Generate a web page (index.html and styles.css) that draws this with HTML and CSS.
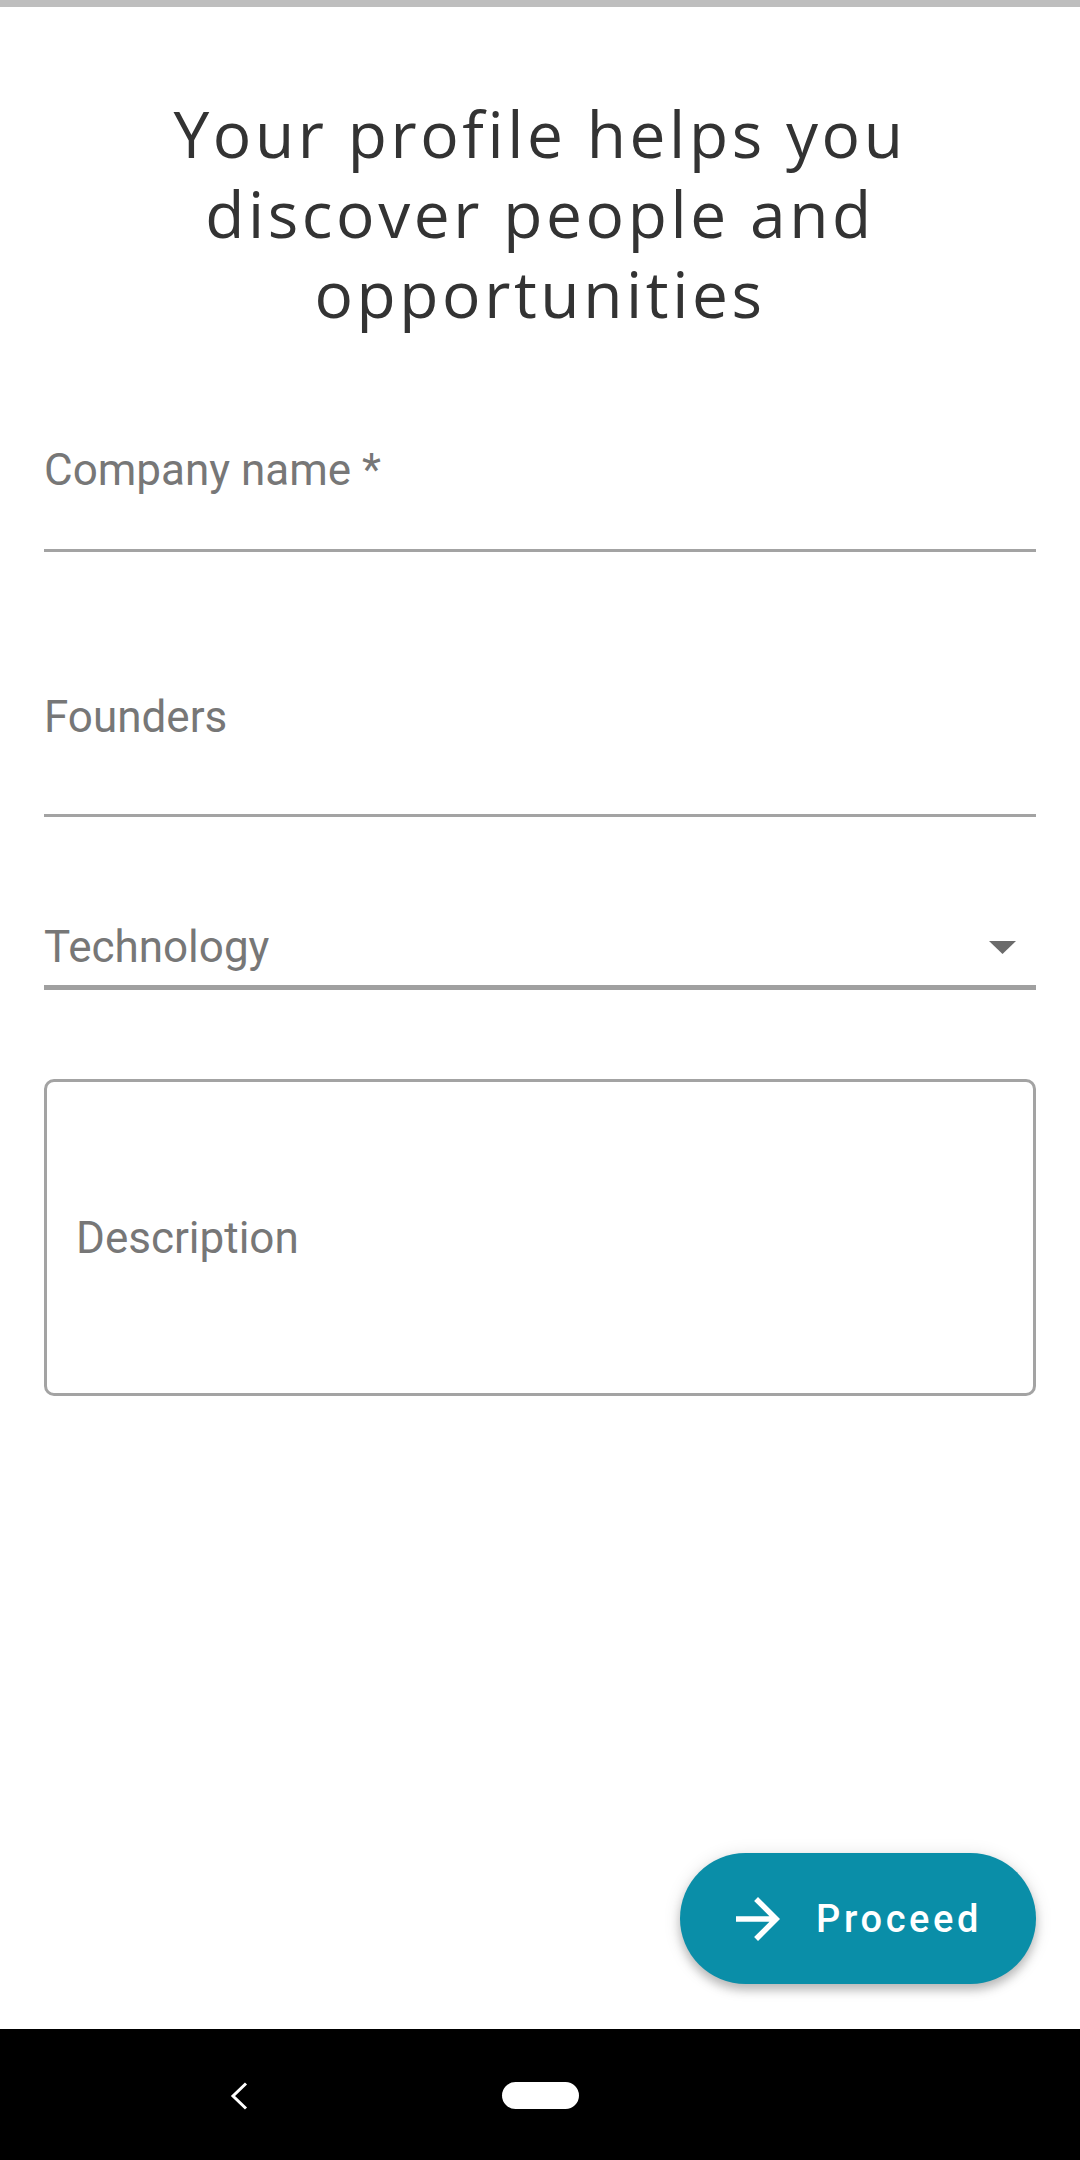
FILE: index.html
```html
<!DOCTYPE html>
<html lang="en">
<head>
<meta charset="utf-8">
<title>Profile</title>
<link rel="stylesheet" href="styles.css">
</head>
<body>
<div class="screen">
  <div class="topline"></div>
  <main class="content">
    <h1 class="title">Your profile helps you discover people and opportunities</h1>
    <div class="field field-company">
      <span class="label">Company name *</span>
    </div>
    <div class="field field-founders">
      <span class="label">Founders</span>
    </div>
    <div class="field field-select">
      <span class="label">Technology</span>
      <svg class="drop" viewBox="0 0 27 13" width="27" height="13"><path d="M0 0h27L13.5 13z" fill="#6b6b6b"/></svg>
    </div>
    <div class="textarea">
      <span class="label">Description</span>
    </div>
    <div class="spacer"></div>
    <div class="actions">
      <button class="fab">
        <svg class="fab-icon" viewBox="0 0 24 24" width="66" height="66"><path d="M12 4l-1.41 1.41L16.17 11H4v2h12.17l-5.58 5.59L12 20l8-8z" fill="#fff"/></svg>
        <span class="fab-text">Proceed</span>
      </button>
    </div>
  </main>
  <nav class="navbar">
    <svg class="back" viewBox="0 0 18 28" width="18" height="28"><path d="M16 1.5L3 14l13 12.5" fill="none" stroke="#fff" stroke-width="3"/></svg>
    <div class="home"></div>
  </nav>
</div>
</body>
</html>
```
FILE: styles.css
```css
* { box-sizing: border-box; }
html, body { margin: 0; padding: 0; background: #fff; }
.screen {
  width: 1080px;
  height: 2160px;
  display: flex;
  flex-direction: column;
  font-family: Roboto, "Liberation Sans", sans-serif;
}
.topline { height: 7px; background: #bebebe; flex: none; }
.content {
  flex: 1;
  display: flex;
  flex-direction: column;
  padding: 0 44px;
}
.title {
  margin: 87px 0 0;
  font-family: "Open Sans", "DejaVu Sans", sans-serif;
  font-weight: 400;
  font-size: 64px;
  line-height: 80px;
  color: #333333;
  text-align: center;
  padding: 0 80px;
  letter-spacing: 3.6px;
}
.label {
  display: block;
  font-size: 44px;
  line-height: 48px;
  color: #777777;
}
.field { border-bottom: 3px solid #a3a3a3; }
.field-company { margin-top: 112px; padding-bottom: 55px; }
.field-founders { margin-top: 141px; padding-bottom: 73px; }
.field-select {
  margin-top: 106px;
  padding-bottom: 14px;
  border-bottom: 5px solid #a0a0a0;
  display: flex;
  align-items: center;
  justify-content: space-between;
  padding-right: 20px;
}
.field-select .label { flex: 1; }
.drop { margin-top: 0; }
.textarea {
  margin-top: 89px;
  height: 317px;
  border: 3px solid #a3a3a3;
  border-radius: 10px;
  display: flex;
  align-items: center;
  padding-left: 29px;
}
.spacer { flex: 1; }
.actions {
  display: flex;
  justify-content: flex-end;
  padding-bottom: 45px;
}
.fab {
  height: 131px;
  border: none;
  border-radius: 66px;
  background: #0a8ea8;
  color: #fff;
  display: flex;
  align-items: center;
  padding: 0 54px 0 45px;
  gap: 25px;
  box-shadow: 0 6px 10px rgba(0,0,0,0.22), 0 2px 18px rgba(0,0,0,0.12);
  font-family: Roboto, "Liberation Sans", sans-serif;
}
.fab-icon { flex: none; }
.fab-text {
  font-size: 38px;
  font-weight: 500;
  letter-spacing: 3.6px;
}
.navbar {
  flex: none;
  height: 131px;
  background: #000;
  display: flex;
  align-items: center;
  padding-left: 230px;
}
.back { flex: none; margin-top: 2px; }
.home {
  margin-left: 254px;
  width: 77px;
  height: 27px;
  border-radius: 14px;
  background: #fff;
  margin-top: 2px;
}
```
